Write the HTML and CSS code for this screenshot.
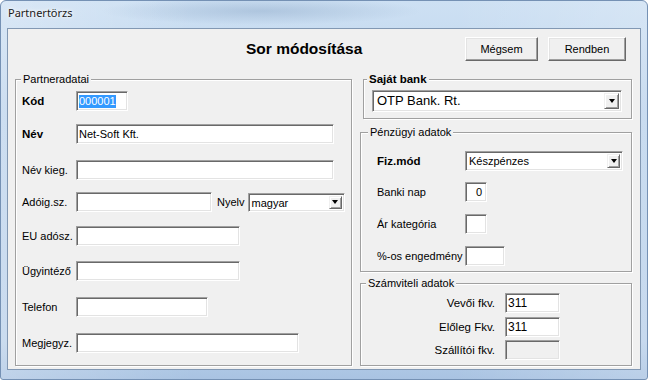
FILE: index.html
```html
<!DOCTYPE html>
<html lang="hu">
<head>
    <meta charset="UTF-8">
    <title>Partnertörzs</title>
    <link rel="stylesheet" href="styles.css">
</head>
<body>
    <div class="window">
        <div class="titlebar">Partnertörzs</div>
        <div class="client">
            <div class="header">
                <h1>Sor módosítása</h1>
                <button class="btn btn-cancel">Mégsem</button>
                <button class="btn btn-ok">Rendben</button>
            </div>
            <div class="content">
                <fieldset class="group partner">
                    <legend>Partneradatai</legend>
                    <div class="partner-grid">
                        <label class="bold">Kód</label>
                        <div class="field w-code"><span class="selected">000001</span></div>

                        <label class="bold">Név</label>
                        <div class="field w-name">Net-Soft Kft.</div>

                        <label>Név kieg.</label>
                        <div class="field w-name"></div>

                        <label>Adóig.sz.</label>
                        <div class="inline">
                            <div class="field w-tax"></div>
                            <label class="lang-label">Nyelv</label>
                            <div class="combo w-lang">
                                <span class="combo-text">magyar</span>
                                <span class="combo-btn small"><i class="arrow"></i></span>
                            </div>
                        </div>

                        <label>EU adósz.</label>
                        <div class="field w-mid"></div>

                        <label>Ügyintéző</label>
                        <div class="field w-mid"></div>

                        <label>Telefon</label>
                        <div class="field w-phone"></div>

                        <label>Megjegyz.</label>
                        <div class="field w-note"></div>
                    </div>
                </fieldset>

                <div class="right-col">
                    <fieldset class="group bank">
                        <legend class="bold">Saját bank</legend>
                        <div class="combo w-bank big">
                            <span class="combo-text">OTP Bank. Rt.</span>
                            <span class="combo-btn"><i class="arrow"></i></span>
                        </div>
                    </fieldset>

                    <fieldset class="group money">
                        <legend>Pénzügyi adatok</legend>
                        <div class="money-grid">
                            <label class="bold">Fiz.mód</label>
                            <div class="combo w-pay">
                                <span class="combo-text">Készpénzes</span>
                                <span class="combo-btn small"><i class="arrow"></i></span>
                            </div>

                            <label>Banki nap</label>
                            <div class="field w-tiny num">0</div>

                            <label>Ár kategória</label>
                            <div class="field w-tiny"></div>

                            <label>%-os engedmény</label>
                            <div class="field w-pct"></div>
                        </div>
                    </fieldset>

                    <fieldset class="group accounts">
                        <legend>Számviteli adatok</legend>
                        <div class="accounts-grid">
                            <label>Vevői fkv.</label>
                            <div class="field w-acc">311</div>

                            <label>Előleg Fkv.</label>
                            <div class="field w-acc">311</div>

                            <label>Szállítói fkv.</label>
                            <div class="field w-acc disabled"></div>
                        </div>
                    </fieldset>
                </div>
            </div>
        </div>
    </div>
</body>
</html>
```

FILE: styles.css
```css
body {
    margin: 0;
    background-color: #fff;
    font-family: "Liberation Sans", Arial, sans-serif;
    font-size: 11px;
    color: #000;
}
.window {
    width: 648px;
    height: 380px;
    box-sizing: border-box;
    border: 1px solid #7591b4;
    border-radius: 6px 6px 3px 3px;
    background:
        radial-gradient(ellipse 160px 14px at 260px 10px, rgba(120, 150, 185, 0.35), transparent),
        linear-gradient(90deg, rgba(255, 255, 255, 0.25), transparent 30%, transparent 70%, rgba(255, 255, 255, 0.2)),
        linear-gradient(#cde0f3, #bcd3ec 30%, #b9d0ea 90%, #a9c3e2);
    display: flex;
    flex-direction: column;
    overflow: hidden;
}
.titlebar {
    height: 27px;
    line-height: 24px;
    padding-left: 7px;
    font-family: "Noto Sans", sans-serif;
    font-size: 11px;
    color: #1b1b1b;
    text-shadow: 0 0 6px #fff, 0 0 3px #fff;
}
.client {
    height: 342px;
    box-sizing: border-box;
    margin: 0 6px;
    border: 1px solid #8298b3;
    background-color: #f0f0f0;
}
.header {
    display: flex;
    align-items: center;
    padding-top: 8px;
    height: 24px;
}
.header h1 {
    margin: 0 0 0 238px;
    font-size: 15.5px;
    font-weight: bold;
    flex: 1;
}
.btn {
    height: 24px;
    padding: 0;
    font-family: "Liberation Sans", Arial, sans-serif;
    font-size: 11px;
    color: #000;
    background-color: #f0f0f0;
    border: 1px solid;
    border-color: #fff #696969 #696969 #fff;
    box-shadow: inset -1px -1px 0 #a0a0a0, inset 1px 1px 0 #e3e3e3;
}
.btn-cancel {
    width: 73px;
}
.btn-ok {
    width: 78px;
    margin-left: 10px;
    margin-right: 14px;
}
.content {
    display: flex;
    margin-top: 12px;
    padding-left: 7px;
}
.group {
    margin: 0;
    padding: 0;
    min-inline-size: 0;
    box-sizing: border-box;
    border: 1px solid #a0a0a0;
    box-shadow: 1px 1px 0 #fff, inset 1px 1px 0 #fff;
}
.group legend {
    padding: 0 2px;
    line-height: 13px;
    background-color: #f0f0f0;
}
.bold {
    font-weight: bold;
    font-size: 11.5px;
}
label {
    line-height: 20px;
    white-space: nowrap;
}

/* Partneradatai */
.partner {
    width: 337px;
    height: 293px;
    padding: 5px 0 0 6px;
}
.partner legend {
    margin-left: -1px;
}
.partner-grid {
    display: grid;
    grid-template-columns: 54px auto;
    grid-template-rows: 33px 36px 32px 34px 35px 36px 36px 20px;
    align-items: start;
}
.inline {
    display: flex;
    align-items: center;
    height: 20px;
}
.lang-label {
    margin-left: 5px;
    margin-right: 3px;
}

/* fields */
.field {
    height: 20px;
    box-sizing: border-box;
    padding: 0 2px;
    line-height: 18px;
    background-color: #fff;
    border: 1px solid;
    border-color: #a0a0a0 #fff #fff #a0a0a0;
    box-shadow: inset 1px 1px 0 #696969, inset -1px -1px 0 #e3e3e3;
    white-space: nowrap;
    overflow: hidden;
}
.field.num {
    text-align: right;
    padding-right: 4px;
}
.field.disabled {
    background-color: #f0f0f0;
}
.selected {
    background-color: #3399ff;
    color: #fff;
    display: inline-block;
    line-height: 13px;
    margin-top: 2px;
}
.w-code { width: 52px; }
.w-name { width: 258px; }
.w-tax { width: 136px; }
.w-mid { width: 164px; }
.w-phone { width: 132px; }
.w-note { width: 223px; }
.w-tiny { width: 22px; }
.w-pct { width: 40px; }
.w-acc {
    width: 55px;
    font-size: 12px;
}

/* combo boxes */
.combo {
    display: flex;
    align-items: stretch;
    height: 19px;
    box-sizing: border-box;
    background-color: #fff;
    border: 1px solid;
    border-color: #a0a0a0 #fff #fff #a0a0a0;
    box-shadow: inset 1px 1px 0 #696969, inset -1px -1px 0 #e3e3e3;
    padding: 2px;
}
.combo-text {
    flex: 1;
    line-height: 15px;
    padding-left: 1px;
    white-space: nowrap;
}
.combo-btn {
    width: 15px;
    display: flex;
    align-items: center;
    justify-content: center;
    background-color: #f0f0f0;
    box-sizing: border-box;
    border: 1px solid;
    border-color: #f0f0f0 #696969 #696969 #f0f0f0;
    box-shadow: inset 1px 1px 0 #fff, inset -1px -1px 0 #a0a0a0;
}
.combo-btn.small {
    width: 13px;
}
.arrow {
    width: 0;
    height: 0;
    border-left: 3.5px solid transparent;
    border-right: 3.5px solid transparent;
    border-top: 4px solid #000;
}
.w-lang { width: 97px; }
.w-pay {
    width: 158px;
    height: 20px;
}
.w-bank {
    width: 250px;
    height: 22px;
}
.big .combo-text {
    font-size: 13px;
    line-height: 16px;
    padding-left: 2px;
}

/* right column */
.right-col {
    width: 272px;
    margin-left: 8px;
}
.bank {
    margin-left: 3px;
    width: 269px;
    height: 46px;
    padding: 4px 0 0 8px;
}
.bank legend {
    margin-left: -5px;
}
.money {
    margin-top: 7px;
    height: 146px;
    padding: 12px 0 0 16px;
}
.money legend {
    margin-left: -9px;
}
.money-grid {
    display: grid;
    grid-template-columns: 88px auto;
    grid-template-rows: 31px 32px 32px 20px;
    align-items: start;
}
.accounts {
    margin-top: 5px;
    height: 89px;
    padding: 3px 0 0 0;
}
.accounts legend {
    margin-left: 5px;
}
.accounts-grid {
    display: grid;
    grid-template-columns: 134px 55px;
    grid-template-rows: 24px 23px 20px;
    column-gap: 10px;
    align-items: start;
}
.accounts-grid label {
    text-align: right;
    font-size: 11.5px;
}
```
